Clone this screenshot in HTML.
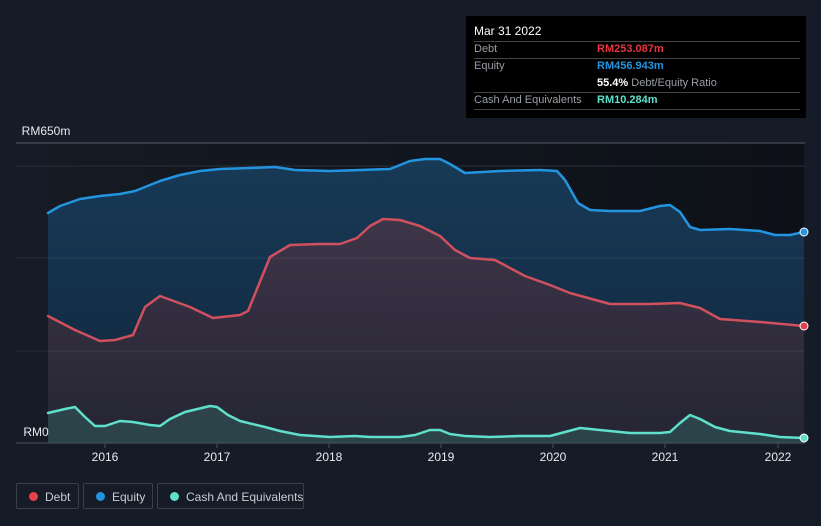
<!DOCTYPE html>
<html><head><style>
body{margin:0;width:821px;height:526px;background:#161c27;font-family:"Liberation Sans",sans-serif;overflow:hidden;position:relative}
.tip{position:absolute;left:466px;top:16px;width:340px;height:102px;background:#000;color:#fff;font-size:11px}
.tip .r{position:absolute;left:8px;right:6px;border-bottom:1px solid #444}
.lg{position:absolute;top:483px;height:26px;border:1px solid #3a3f4a;border-radius:2px;color:#c8ccd2;font-size:12px;line-height:26px;box-sizing:border-box;white-space:nowrap}
.lg i{position:absolute;top:8px;width:9px;height:9px;border-radius:50%}
.lg span{position:absolute;left:28px;top:0}
</style></head><body>
<svg width="821" height="526" style="position:absolute;left:0;top:0">
<defs>
<linearGradient id="eq" x1="0" y1="0" x2="0" y2="1"><stop offset="0" stop-color="#173a57"/><stop offset="1" stop-color="#10253a"/></linearGradient>
<linearGradient id="db" x1="0" y1="0" x2="0" y2="1"><stop offset="0" stop-color="#3d3548"/><stop offset="1" stop-color="#252533"/></linearGradient>
<linearGradient id="bg" x1="0" y1="0" x2="1" y2="0"><stop offset="0" stop-color="#151a23"/><stop offset="1" stop-color="#0d1017"/></linearGradient>
</defs>
<rect x="48" y="143" width="756" height="300" fill="url(#bg)"/>
<line x1="16" y1="143" x2="805" y2="143" stroke="#555a63" stroke-width="1"/>
<line x1="16" y1="166" x2="805" y2="166" stroke="#2a2f38"/>
<polygon fill="url(#eq)" points="48,443 48,213 60,206 80,199 100,196 120,194 135,191 160,181 180,175 200,171 220,169 250,168 275,167 295,170 330,171 360,170 390,169 410,161 425,159 440,159 450,164 465,173 500,171 540,170 557,171 565,180 578,203 590,210 610,211 640,211 660,206 670,205 680,212 690,227 700,230 730,229 760,231 775,235 790,235 804,232 804,443"/>
<polygon fill="url(#db)" points="48,443 48,316 75,330 100,341 115,340 133,335 145,307 160,296 190,307 213,318 240,315 248,311 270,257 290,245 320,244 340,244 357,238 370,226 383,219 400,220 420,226 440,236 455,250 470,258 495,260 510,268 525,276 550,285 570,293 610,304 650,304 680,303 700,308 720,319 760,322 804,326 804,443"/>
<line x1="16" y1="258" x2="805" y2="258" stroke="#ffffff" stroke-opacity=".08"/>
<line x1="16" y1="351" x2="805" y2="351" stroke="#ffffff" stroke-opacity=".08"/>
<polygon fill="#2f4b50" fill-opacity=".8" points="48,443 48,413 65,409 75,407 85,417 95,426 105,426 120,421 133,422 150,425 160,426 170,419 185,412 210,406 217,407 228,415 240,421 265,427 280,431 300,435 330,437 355,436 370,437 400,437 415,435 430,430 440,430 450,434 465,436 490,437 520,436 550,436 565,432 580,428 600,430 630,433 660,433 670,432 680,423 690,415 700,419 715,427 730,431 760,434 780,437 804,438 804,443"/>
<g fill="none" stroke-width="2.5" stroke-linejoin="round" stroke-linecap="round">
<polyline stroke="#2394e0" points="48,213 60,206 80,199 100,196 120,194 135,191 160,181 180,175 200,171 220,169 250,168 275,167 295,170 330,171 360,170 390,169 410,161 425,159 440,159 450,164 465,173 500,171 540,170 557,171 565,180 578,203 590,210 610,211 640,211 660,206 670,205 680,212 690,227 700,230 730,229 760,231 775,235 790,235 804,232"/>
<polyline stroke="#d0505f" points="48,316 75,330 100,341 115,340 133,335 145,307 160,296 190,307 213,318 240,315 248,311 270,257 290,245 320,244 340,244 357,238 370,226 383,219 400,220 420,226 440,236 455,250 470,258 495,260 510,268 525,276 550,285 570,293 610,304 650,304 680,303 700,308 720,319 760,322 804,326"/>
<polyline stroke="#5fe0cc" points="48,413 65,409 75,407 85,417 95,426 105,426 120,421 133,422 150,425 160,426 170,419 185,412 210,406 217,407 228,415 240,421 265,427 280,431 300,435 330,437 355,436 370,437 400,437 415,435 430,430 440,430 450,434 465,436 490,437 520,436 550,436 565,432 580,428 600,430 630,433 660,433 670,432 680,423 690,415 700,419 715,427 730,431 760,434 780,437 804,438"/>
</g>
<circle cx="804" cy="232" r="4" fill="#2394e0" stroke="#fff" stroke-width="1"/>
<circle cx="804" cy="326" r="4" fill="#e04050" stroke="#fff" stroke-width="1"/>
<circle cx="804" cy="438" r="4" fill="#5fe0cc" stroke="#fff" stroke-width="1"/>
<line x1="16" y1="443" x2="805" y2="443" stroke="#4a505a"/>
<g stroke="#4a505a"><line x1="105" y1="443" x2="105" y2="448"/><line x1="217" y1="443" x2="217" y2="448"/><line x1="329" y1="443" x2="329" y2="448"/><line x1="441" y1="443" x2="441" y2="448"/><line x1="553" y1="443" x2="553" y2="448"/><line x1="665" y1="443" x2="665" y2="448"/><line x1="778" y1="443" x2="778" y2="448"/></g>
<g fill="#e8eaed" font-size="12" text-anchor="middle" font-family="Liberation Sans,sans-serif">
<text x="105" y="461">2016</text><text x="217" y="461">2017</text><text x="329" y="461">2018</text><text x="441" y="461">2019</text><text x="553" y="461">2020</text><text x="665" y="461">2021</text><text x="778" y="461">2022</text>
<text x="46" y="135">RM650m</text><text x="36" y="436">RM0</text>
</g>
</svg>
<div class="tip">
<div style="position:absolute;left:8px;top:8px;font-size:12px">Mar 31 2022</div>
<div class="r" style="top:25px"></div>
<div style="position:absolute;left:8px;top:27px;color:#9a9ea5">Debt</div><div style="position:absolute;left:131px;top:27px;color:#e8343f;font-weight:bold">RM253.087m</div>
<div class="r" style="top:42px"></div>
<div style="position:absolute;left:8px;top:44px;color:#9a9ea5">Equity</div><div style="position:absolute;left:131px;top:44px;color:#2394e0;font-weight:bold">RM456.943m</div>
<div style="position:absolute;left:131px;top:61px;color:#9a9ea5"><b style="color:#fff">55.4%</b> Debt/Equity Ratio</div>
<div class="r" style="top:76px"></div>
<div style="position:absolute;left:8px;top:78px;color:#9a9ea5">Cash And Equivalents</div><div style="position:absolute;left:131px;top:78px;color:#5fe0cc;font-weight:bold">RM10.284m</div>
<div class="r" style="top:93px"></div>
</div>
<div class="lg" style="left:16px;width:63px"><i style="left:12px;background:#e8434a"></i><span>Debt</span></div>
<div class="lg" style="left:83px;width:70px"><i style="left:12px;background:#2394e0"></i><span>Equity</span></div>
<div class="lg" style="left:157px;width:147px"><i style="left:12px;background:#5fe0cc"></i><span>Cash And Equivalents</span></div>
</body></html>
